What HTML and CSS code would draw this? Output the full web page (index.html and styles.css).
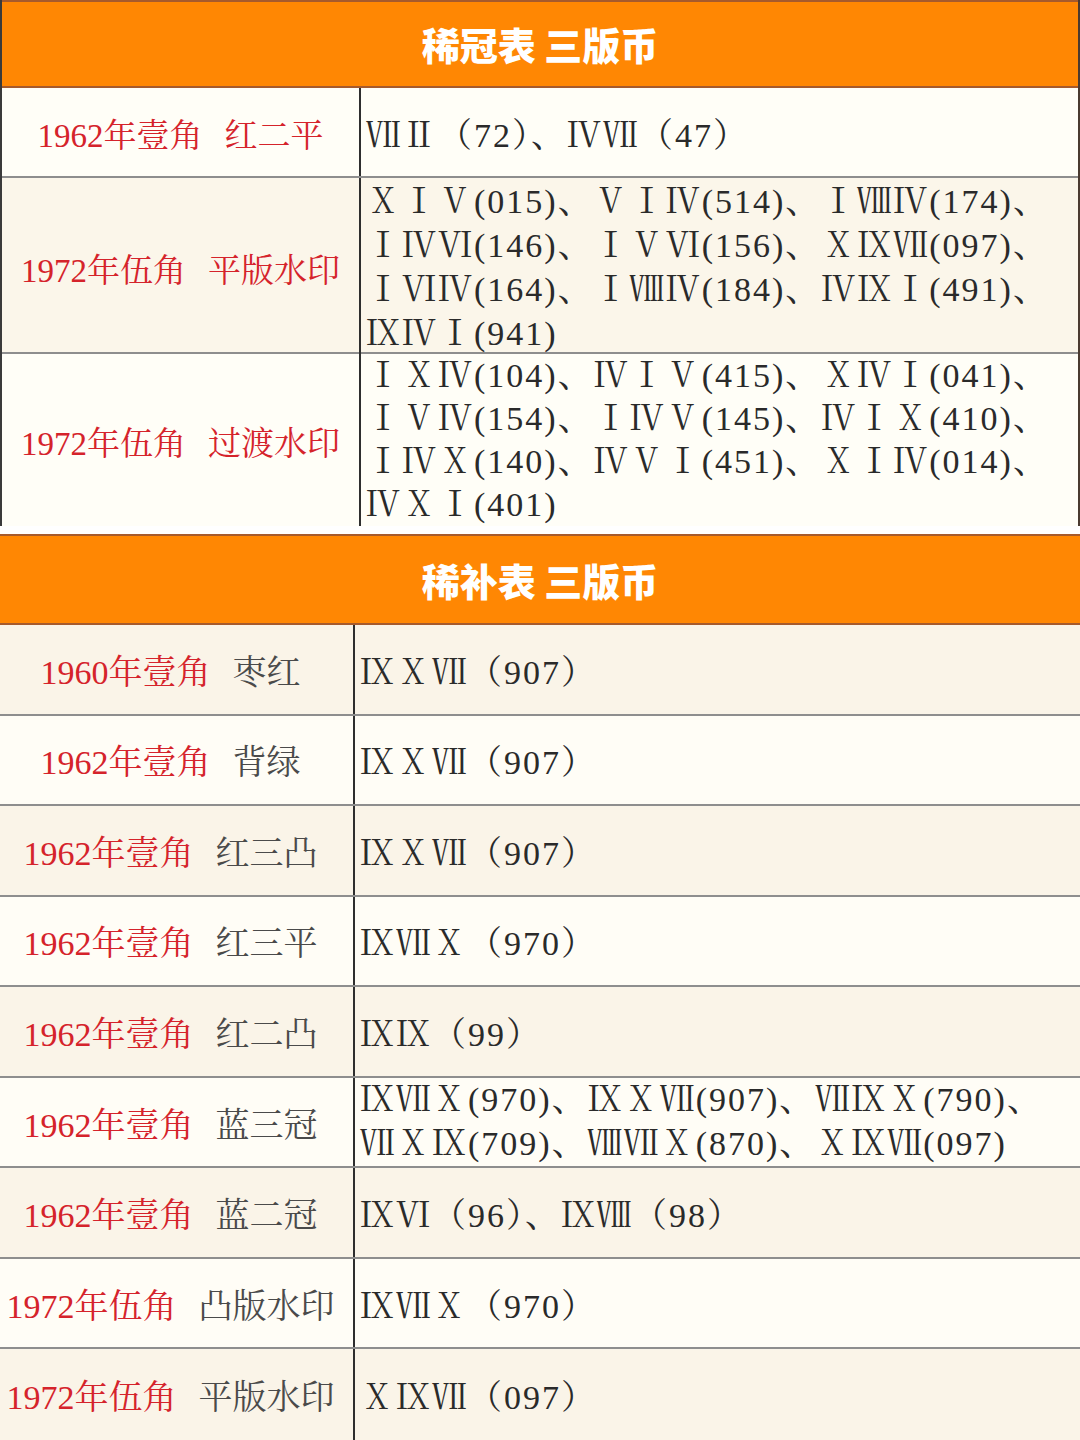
FILE: index.html
```html
<!DOCTYPE html>
<html lang="zh-CN">
<head>
<meta charset="utf-8">
<title>稀冠表 稀补表 三版币</title>
<link rel="stylesheet" href="styles.css">
</head>
<body>
<div class="page">
  <section class="tbl t1">
    <div class="hdr">稀冠表 三版币</div>
    <div class="row h1 light">
      <div class="lc red">1962年壹角<span class="desc">红二平</span></div>
      <div class="rc">ⅦⅡ（72）、ⅣⅦ（47）</div>
    </div>
    <div class="row h2 beige">
      <div class="lc red">1972年伍角<span class="desc">平版水印</span></div>
      <div class="rc multi">ⅩⅠⅤ(015)、ⅤⅠⅣ(514)、ⅠⅧⅣ(174)、<br>ⅠⅣⅥ(146)、ⅠⅤⅥ(156)、ⅩⅨⅦ(097)、<br>ⅠⅥⅣ(164)、ⅠⅧⅣ(184)、ⅣⅨⅠ(491)、<br>ⅨⅣⅠ(941)</div>
    </div>
    <div class="row h3 light last">
      <div class="lc red">1972年伍角<span class="desc">过渡水印</span></div>
      <div class="rc multi tight">ⅠⅩⅣ(104)、ⅣⅠⅤ(415)、ⅩⅣⅠ(041)、<br>ⅠⅤⅣ(154)、ⅠⅣⅤ(145)、ⅣⅠⅩ(410)、<br>ⅠⅣⅩ(140)、ⅣⅤⅠ(451)、ⅩⅠⅣ(014)、<br>ⅣⅩⅠ(401)</div>
    </div>
  </section>

  <section class="tbl t2">
    <div class="hdr">稀补表 三版币</div>
    <div class="rows">
      <div class="row beige">
        <div class="lc"><span class="red">1960年壹角</span><span class="desc">枣红</span></div>
        <div class="rc">ⅨⅩⅦ（907）</div>
      </div>
      <div class="row light">
        <div class="lc"><span class="red">1962年壹角</span><span class="desc">背绿</span></div>
        <div class="rc">ⅨⅩⅦ（907）</div>
      </div>
      <div class="row beige">
        <div class="lc"><span class="red">1962年壹角</span><span class="desc">红三凸</span></div>
        <div class="rc">ⅨⅩⅦ（907）</div>
      </div>
      <div class="row light">
        <div class="lc"><span class="red">1962年壹角</span><span class="desc">红三平</span></div>
        <div class="rc">ⅨⅦⅩ（970）</div>
      </div>
      <div class="row beige">
        <div class="lc"><span class="red">1962年壹角</span><span class="desc">红二凸</span></div>
        <div class="rc">ⅨⅨ（99）</div>
      </div>
      <div class="row light">
        <div class="lc"><span class="red">1962年壹角</span><span class="desc">蓝三冠</span></div>
        <div class="rc two">ⅨⅦⅩ(970)、ⅨⅩⅦ(907)、ⅦⅨⅩ(790)、<br>ⅦⅩⅨ(709)、ⅧⅦⅩ(870)、ⅩⅨⅦ(097)</div>
      </div>
      <div class="row beige">
        <div class="lc"><span class="red">1962年壹角</span><span class="desc">蓝二冠</span></div>
        <div class="rc">ⅨⅥ（96）、ⅨⅧ（98）</div>
      </div>
      <div class="row light">
        <div class="lc"><span class="red">1972年伍角</span><span class="desc">凸版水印</span></div>
        <div class="rc">ⅨⅦⅩ（970）</div>
      </div>
      <div class="row beige last">
        <div class="lc"><span class="red">1972年伍角</span><span class="desc">平版水印</span></div>
        <div class="rc">ⅩⅨⅦ（097）</div>
      </div>
    </div>
  </section>
</div>
</body>
</html>
```
FILE: styles.css
```css
html, body {
  margin: 0;
  padding: 0;
  background: #ffffff;
}

.page {
  width: 1080px;
  height: 1440px;
  overflow: hidden;
  display: flex;
  flex-direction: column;
  gap: 8px;
  font-family: "Liberation Serif", "Noto Serif CJK SC", serif;
}

.tbl {
  box-sizing: border-box;
  overflow: hidden;
}

.t1 {
  height: 526px;
  border-left: 2px solid #3a3a3a;
  border-right: 2px solid #4a3a30;
}

.t2 {
  height: 906px;
  display: flex;
  flex-direction: column;
}

.hdr {
  box-sizing: border-box;
  height: 88px;
  background: #ff8703;
  border-top: 2px solid #a65a2c;
  border-bottom: 2px solid #a65a2c;
  color: #ffffff;
  font-family: "Noto Sans CJK SC", sans-serif;
  font-weight: 900;
  font-size: 38px;
  display: flex;
  align-items: center;
  justify-content: center;
  padding-bottom: 1px;
}

.t2 .hdr {
  height: 91px;
  flex: none;
}

.row {
  box-sizing: border-box;
  display: grid;
  grid-template-columns: 357px 1fr;
  border-bottom: 2px solid #8e8e8e;
}

.row.last {
  border-bottom: none;
}

.light { background: #fffef7; }
.beige { background: #fbf6ea; }

.t1 .h1 { height: 90px; }
.t1 .h2 { height: 176px; }
.t1 .h3 { height: 172px; }

.lc {
  display: flex;
  align-items: center;
  justify-content: center;
  font-size: 33px;
  white-space: nowrap;
}

.red { color: #d5232b; }

.desc { margin-left: 22px; }

.t2 .lc {
  font-size: 34px;
  padding-right: 12px;
}

.t2 .lc .desc {
  color: #4a4a4a;
}

.rc {
  border-left: 2px solid #2e2e2e;
  display: flex;
  align-items: center;
  padding-left: 5px;
  font-size: 34px;
  letter-spacing: 2px;
  color: #2a2a2a;
  white-space: nowrap;
}

.rc.multi {
  display: block;
  line-height: 44px;
  padding-top: 2px;
}

.rc.multi.tight {
  line-height: 43px;
  padding-top: 0;
}

.rc.two {
  line-height: 44px;
}

.rows {
  flex: 1;
  display: grid;
  grid-template-rows: repeat(9, 1fr);
}

.t2 .row {
  grid-template-columns: 353px 1fr;
}

.t2 .beige { background: #faf4e8; }
.t2 .light { background: #fffdf6; }
```
